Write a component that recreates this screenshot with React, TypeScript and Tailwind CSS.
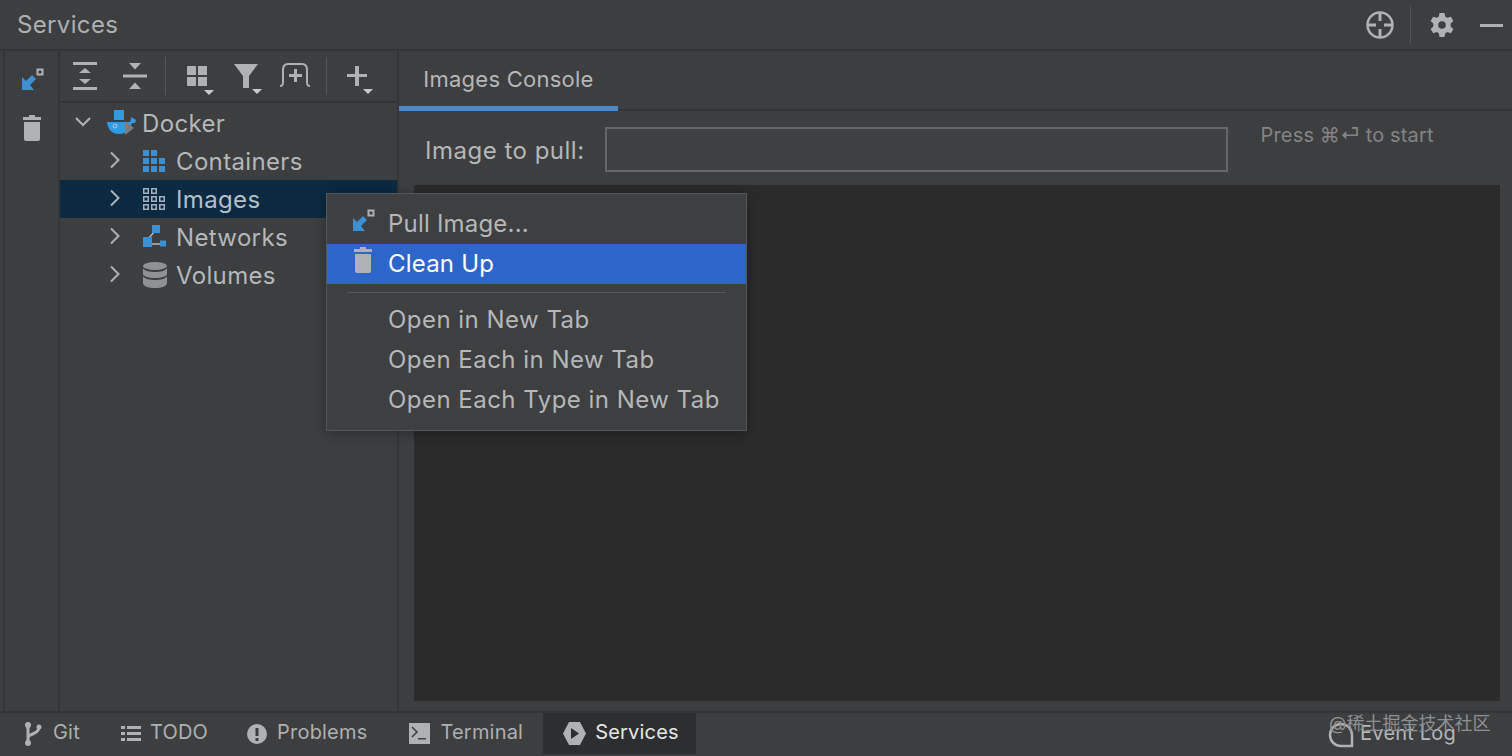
import React from "react";

const G = "#afb1b3";
const B = "#3d8fd1";

function PullIcon({ className = "" }: { className?: string }) {
  return (
    <svg width="24" height="24" viewBox="0 0 24 24" className={className}>
      <rect x="16.5" y="1.5" width="5" height="5" fill="none" stroke={G} strokeWidth="2" />
      <path d="M1 22V9l4 4 6-6 4 4-6 6 4 5z" fill={B} />
    </svg>
  );
}
function Trash({ className = "" }: { className?: string }) {
  return (
    <svg width="20" height="26" viewBox="0 0 20 26" className={className}>
      <path d="M7 0h6v2h6v3H1V2h6z" fill={G} />
      <path d="M2 7h16v17a2 2 0 0 1-2 2H4a2 2 0 0 1-2-2z" fill={G} />
    </svg>
  );
}
function Dropdown() {
  return <path d="M0 0h10l-5 5z" fill="#c8c9ca" />;
}
function ExpandAll() {
  return (
    <svg width="24" height="28" viewBox="0 0 24 28">
      <path d="M0 0h24v3H0zM0 25h24v3H0z" fill={G} />
      <path d="M12 6l6 5H6zM12 22l-6-5h12z" fill={G} />
    </svg>
  );
}
function CollapseAll() {
  return (
    <svg width="24" height="26" viewBox="0 0 24 26">
      <path d="M0 11.5h24v3H0z" fill={G} />
      <path d="M6 0h12l-6 6.5zM12 19.500l6 6.500H6z" fill={G} />
    </svg>
  );
}
function GroupIcon() {
  return (
    <svg width="30" height="30" viewBox="0 0 30 30">
      <path d="M0 1h9v9H0zM11 1h9v9h-9zM0 12h9v9H0zM11 12h9v9h-9z" fill={G} />
      <g transform="translate(17 25)"><Dropdown /></g>
    </svg>
  );
}
function FilterIcon() {
  return (
    <svg width="30" height="30" viewBox="0 0 30 30">
      <path d="M0 0h24l-9 12v12H9V12z" fill={G} />
      <g transform="translate(18 25)"><Dropdown /></g>
    </svg>
  );
}
function NewTabIcon() {
  return (
    <svg width="32" height="26" viewBox="0 0 32 26">
      <path d="M1 24c3 0 3-2 3-5V8c0-4 2-6 5-6h14c3 0 5 2 5 6v11c0 3 0 5 3 5" fill="none" stroke={G} strokeWidth="2" />
      <path d="M15 7h3v5h5v3h-5v5h-3v-5h-5v-3h5z" fill={G} />
    </svg>
  );
}
function PlusIcon() {
  return (
    <svg width="30" height="30" viewBox="0 0 30 30">
      <path d="M8 1h4v8h8v3h-8v9H8v-9H0V9h8z" fill={G} />
      <g transform="translate(16 24)"><Dropdown /></g>
    </svg>
  );
}
function Chevron({ down = false }: { down?: boolean }) {
  return (
    <svg width="18" height="18" viewBox="0 0 18 18" className="mb-[2px]">
      {down ? (
        <path d="M2 5l7 7 7-7" fill="none" stroke={G} strokeWidth="2" />
      ) : (
        <path d="M5 1.500l7.500 7.500L5 16.500" fill="none" stroke={G} strokeWidth="2" />
      )}
    </svg>
  );
}
function DockerIcon() {
  return (
    <svg width="30" height="26" viewBox="0 0 30 26">
      <path d="M7 0h10v10H7z" fill="#2e9be6" />
      <path d="M0 12h22c1 0 2-1 2-3V7l5 3-1 3h-3c-2 6-6 11-13 11-7 0-11-4-12-12z" fill="#2e9be6" />
      <circle cx="8" cy="16" r="2" fill="none" stroke="#9fd0f0" strokeWidth="1" />
      <path d="M18 11l9 7-9 7z" fill="#7b7d7f" />
    </svg>
  );
}
function ContainersIcon() {
  return (
    <svg width="22" height="22" viewBox="0 0 22 22" fill={B}>
      <path d="M0 0h6v6H0zM8 0h6v6H8zM0 8h6v6H0zM8 8h6v6H8zM16 8h6v6h-6zM0 16h6v6H0zM8 16h6v6H8zM16 16h6v6h-6z" />
    </svg>
  );
}
function ImagesIcon() {
  const cells = [[0, 0], [8, 0], [0, 8], [8, 8], [16, 8], [0, 16], [8, 16], [16, 16]];
  return (
    <svg width="22" height="22" viewBox="0 0 22 22">
      {cells.map(([x, y]) => (
        <rect key={`${x}-${y}`} x={x + 0.75} y={y + 0.75} width="4.500" height="4.500" fill="none" stroke="#a3b1bf" strokeWidth="1.500" />
      ))}
    </svg>
  );
}
function NetworksIcon() {
  return (
    <svg width="24" height="24" viewBox="0 0 24 24">
      <path d="M5 14L13 5M7 19h12" stroke="#b5b7b9" strokeWidth="1.500" fill="none" />
      <path d="M9 0h8v8H9z" fill={B} />
      <path d="M0 12h9v10H0zM17 15.500h6v6h-6z" fill={B} />
    </svg>
  );
}
function VolumesIcon() {
  return (
    <svg width="24" height="26" viewBox="0 0 24 26" fill="#8f9193">
      <ellipse cx="12" cy="4" rx="12" ry="4" />
      <path d="M0 6.500c2 2.500 7 3.500 12 3.500s10-1 12-3.500V12c0 2-5 4-12 4S0 14 0 12z" />
      <path d="M0 14.500c2 2.500 7 3.500 12 3.500s10-1 12-3.500V21c0 3-5 5-12 5S0 24 0 21z" />
    </svg>
  );
}
function TreeRow({ icon, label, selected = false }: { icon: React.ReactNode; label: string; selected?: boolean }) {
  return (
    <div className={`flex h-[38px] items-center pl-[46px] ${selected ? "bg-[#0b2a42] text-[#b4bfc9]" : "text-[#b5b7b9]"}`}>
      <Chevron />
      <span className="ml-[19px] flex w-[33px] items-center">{icon}</span>
      <span className="pt-[1px]">{label}</span>
    </div>
  );
}
function BottomTab({ icon, label, active = false, className = "" }: { icon: React.ReactNode; label: string; active?: boolean; className?: string }) {
  return (
    <div className={`flex h-[41px] items-center ${active ? "bg-[#2d2e2f] text-[#e6e6e6]" : "text-[#aeb0b2]"} ${className}`}>
      {icon}
      <span className="pb-[3px]">{label}</span>
    </div>
  );
}
function MenuItem({ label, icon, active = false, wide = false }: { label: string; icon?: React.ReactNode; active?: boolean; wide?: boolean }) {
  return (
    <div className={`relative flex h-[40px] items-center pl-[61px] ${wide ? "tracking-[0.47px]" : "tracking-[0.2px]"} ${active ? "bg-[#2e65ca] text-white" : "text-[#b5b7b9]"}`}>
      {icon && <span className="absolute left-[25px] top-[5px] flex">{icon}</span>}
      {label}
    </div>
  );
}

export default function App() {
  return (
    <div className="relative flex h-[756px] w-[1512px] flex-col overflow-hidden bg-[#3c3e40] font-['Inter','Noto_Sans_CJK_SC',sans-serif] text-[24px] tracking-[0.35px]">
      <header className="flex h-[51px] shrink-0 items-center border-b-2 border-[#333536] pl-[17px] pr-[9px] pt-[1px] text-[#aeb0b2]">
        <span>Services</span>
        <div className="ml-auto flex items-center">
          <svg width="28" height="28" viewBox="0 0 28 28">
            <circle cx="14" cy="14" r="12.500" fill="none" stroke={G} strokeWidth="2.500" />
            <path d="M14 2v8M14 18v8M2 14h8M18 14h8" stroke={G} strokeWidth="3" />
          </svg>
          <div className="ml-[16px] h-[38px] w-px bg-[#505254]" />
          <svg width="26" height="26" viewBox="0 0 24 24" className="ml-[18px]">
            <path fill={G} fillRule="evenodd" d="M9.700 0h4.600l.7 3.300 2 1.100 3.200-1.100 2.300 4-2.500 2.200v2.900l2.500 2.200-2.300 4-3.200-1.100-2 1.100-.7 3.400H9.700L9 18.600l-2-1.100-3.200 1.100-2.300-4L4 12.400V9.500L1.500 7.300l2.300-4L7 4.400l2-1.100zM12 7.500a3.500 3.500 0 1 0 0 7 3.500 3.500 0 0 0 0-7z" transform="translate(0 1)" />
          </svg>
          <div className="ml-[25px] h-[3px] w-[23px] bg-[#afb1b3]" />
        </div>
      </header>

      <main className="flex min-h-0 flex-1">
        <div className="w-[5px] shrink-0 border-r-2 border-[#333536]" />
        <aside className="flex w-[55px] shrink-0 flex-col items-center border-r-2 border-[#333536] pt-[17px]">
          <PullIcon className="ml-[3px]" />
          <Trash className="mt-[23px] ml-[1px]" />
        </aside>

        <section className="flex w-[339px] shrink-0 flex-col border-r-2 border-[#333536]">
          <div className="flex h-[52px] shrink-0 items-center border-b-2 border-[#333536] pl-[13px]">
            <ExpandAll />
            <span className="ml-[26px] flex"><CollapseAll /></span>
            <div className="ml-[18px] h-[38px] w-px bg-[#55575a]" />
            <span className="ml-[21px] mt-[8px] flex"><GroupIcon /></span>
            <span className="ml-[17px] mt-[6px] flex"><FilterIcon /></span>
            <span className="ml-[15px] mb-[3px] flex"><NewTabIcon /></span>
            <div className="ml-[15px] h-[38px] w-px bg-[#55575a]" />
            <span className="ml-[20px] mt-[8px] flex"><PlusIcon /></span>
          </div>
          <div className="pt-[1px]">
            <div className="flex h-[38px] items-center pl-[14px] text-[#b5b7b9]">
              <Chevron down />
              <span className="ml-[15px] flex w-[35px] items-center"><DockerIcon /></span>
              <span className="pt-[2px]">Docker</span>
            </div>
            <TreeRow icon={<ContainersIcon />} label="Containers" />
            <TreeRow icon={<ImagesIcon />} label="Images" selected />
            <TreeRow icon={<NetworksIcon />} label="Networks" />
            <TreeRow icon={<VolumesIcon />} label="Volumes" />
          </div>
        </section>

        <section className="flex min-w-0 flex-1 flex-col pr-[12px]">
          <div className="-mr-[12px] flex h-[60px] shrink-0 border-b-2 border-[#333536]">
            <div className="flex h-[60px] w-[219px] items-center justify-center border-b-[5px] border-[#4a88c7] pt-[2px] text-[22px] tracking-[0.25px] text-[#b5b7b9]">
              Images Console
            </div>
          </div>
          <div className="flex h-[74px] shrink-0 pl-[26px]">
            <span className="mt-[22px] tracking-[0.5px] text-[#b5b7b9]">Image to pull:</span>
            <div className="ml-[20px] mt-[16px] h-[45px] w-[623px] border-2 border-[#646668] bg-[#3e4042]" />
            <span className="ml-[33px] mt-[9px] text-[20px] tracking-[0.15px] text-[#828486]">Press ⌘⏎ to start</span>
          </div>
          <div className="ml-[15px] h-[516px] bg-[#2b2b2b]" />
        </section>
      </main>

      <footer className="flex h-[45px] shrink-0 items-start border-t-2 border-[#333536] pl-[24px] text-[20px] tracking-[0.2px]">
        <BottomTab
          label="Git"
          className="pr-[41px]"
          icon={
            <svg width="18" height="26" viewBox="0 0 18 26" className="mr-[11px]">
              <circle cx="4" cy="4" r="3" fill={G} />
              <circle cx="4" cy="22" r="3" fill={G} />
              <circle cx="15" cy="6" r="2.500" fill={G} />
              <path d="M4 4v18M4 17c0-5 11-3 11-11" fill="none" stroke={G} strokeWidth="3" />
            </svg>
          }
        />
        <BottomTab
          label="TODO"
          className="pr-[39px]"
          icon={
            <svg width="20" height="16" viewBox="0 0 20 16" className="mr-[9px]" fill={G}>
              <path d="M0 0h4v3H0zM6 0h14v3H6zM0 6h4v3H0zM6 6h14v3H6zM0 12h4v3H0zM6 12h14v3H6z" />
            </svg>
          }
        />
        <BottomTab
          label="Problems"
          className="pr-[42px]"
          icon={
            <svg width="20" height="20" viewBox="0 0 20 20" className="mr-[10px]">
              <circle cx="10" cy="10" r="10" fill={G} />
              <path d="M8.500 4h3v8h-3zM8.500 14h3v3h-3z" fill="#3c3e40" />
            </svg>
          }
        />
        <BottomTab
          label="Terminal"
          className="pr-[20px]"
          icon={
            <svg width="21" height="21" viewBox="0 0 21 21" className="mr-[10px]">
              <path d="M0 0h21v21H0z" fill={G} />
              <path d="M3 4l5 5-5 5" fill="none" stroke="#3c3e40" strokeWidth="1.500" />
              <path d="M9 15h8v1.500H9z" fill="#3c3e40" />
            </svg>
          }
        />
        <BottomTab
          label="Services"
          active
          className="w-[153px] pl-[20px]"
          icon={
            <svg width="23" height="23" viewBox="0 0 23 23" className="mr-[9px]">
              <path d="M6 0h11l6 11.500L17 23H6L0 11.500z" fill={G} />
              <path d="M8 6l8 5.500L8 17z" fill="#2d2e2f" />
            </svg>
          }
        />
        <div className="ml-auto flex h-[41px] items-center pr-[56px] text-[#b5b7b9]">
          <svg width="26" height="27" viewBox="0 0 26 27" className="mr-[6px] mt-[3px]">
            <path d="M13 2a11 11 0 1 0 0 22h11V13A11 11 0 0 0 13 2z" fill="none" stroke={G} strokeWidth="2.500" />
          </svg>
          <span className="pb-[2px]">Event Log</span>
        </div>
      </footer>

      <div className="absolute left-[326px] top-[193px] h-[238px] w-[421px] border border-[#555759] bg-[#3d3f41] pt-[10px] shadow-[0_2px_12px_rgba(0,0,0,0.3)]">
        <MenuItem label="Pull Image..." icon={<PullIcon />} />
        <MenuItem label="Clean Up" active icon={<Trash className="ml-[1px] -mt-[2px]" />} />
        <div className="mx-[20px] mb-[7px] mt-[8px] h-px bg-[#56585a]" />
        <MenuItem label="Open in New Tab" wide />
        <MenuItem label="Open Each in New Tab" wide />
        <MenuItem label="Open Each Type in New Tab" wide />
      </div>

      <div className="absolute left-[1329px] top-[710px] text-[18px] tracking-normal text-[#8e9092]">@稀土掘金技术社区</div>
    </div>
  );
}
